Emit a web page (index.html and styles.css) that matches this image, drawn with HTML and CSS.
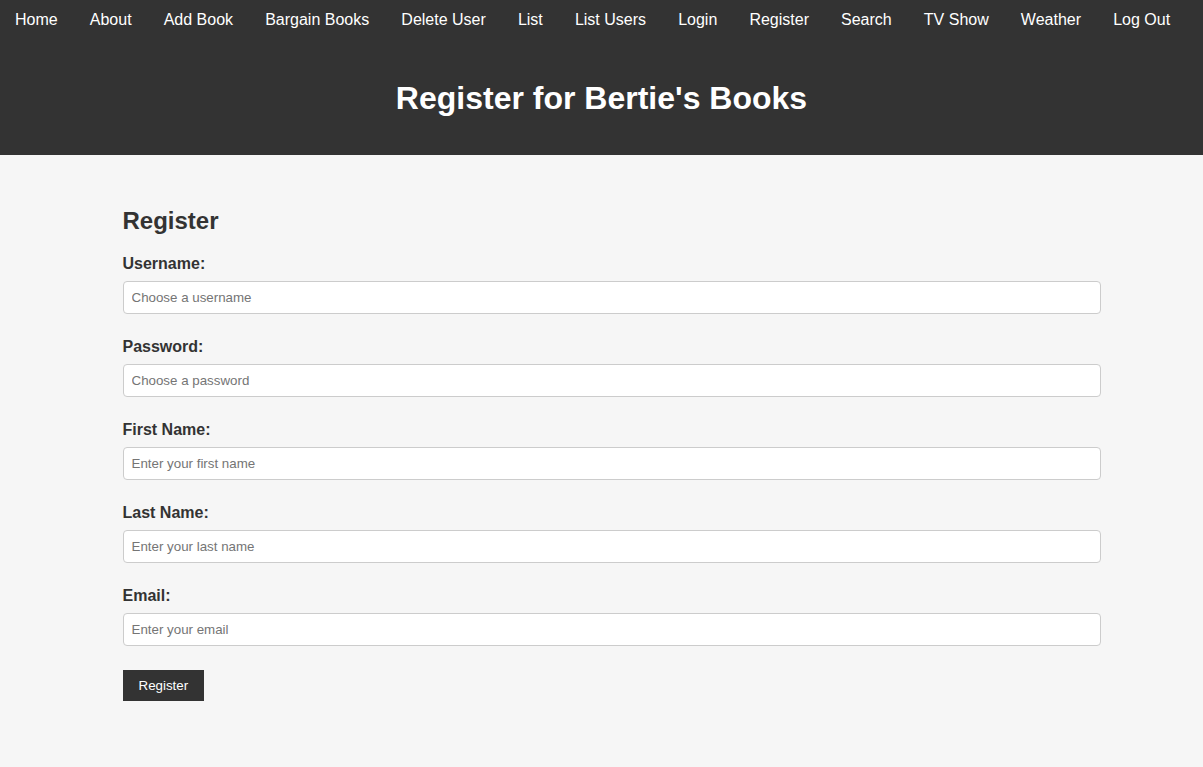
FILE: index.html
```html
<!DOCTYPE html>
<html lang="en">
<head>
<meta charset="utf-8">
<title>Register for Bertie's Books</title>
<link rel="stylesheet" href="styles.css">
</head>
<body>
<header class="site-header">
  <nav class="nav">
    <a href="#">Home</a>
    <a href="#">About</a>
    <a href="#">Add Book</a>
    <a href="#">Bargain Books</a>
    <a href="#">Delete User</a>
    <a href="#">List</a>
    <a href="#">List Users</a>
    <a href="#">Login</a>
    <a href="#">Register</a>
    <a href="#">Search</a>
    <a href="#">TV Show</a>
    <a href="#">Weather</a>
    <a href="#">Log Out</a>
  </nav>
  <h1 class="title">Register for Bertie's Books</h1>
</header>
<main class="main">
  <div class="container">
    <h2 class="heading">Register</h2>
    <form class="form">
      <div class="group">
        <label for="u">Username:</label>
        <input id="u" type="text" placeholder="Choose a username">
      </div>
      <div class="group">
        <label for="p">Password:</label>
        <input id="p" type="password" placeholder="Choose a password">
      </div>
      <div class="group">
        <label for="f">First Name:</label>
        <input id="f" type="text" placeholder="Enter your first name">
      </div>
      <div class="group">
        <label for="l">Last Name:</label>
        <input id="l" type="text" placeholder="Enter your last name">
      </div>
      <div class="group">
        <label for="e">Email:</label>
        <input id="e" type="email" placeholder="Enter your email">
      </div>
      <button type="button" class="btn">Register</button>
    </form>
  </div>
</main>
</body>
</html>
```

FILE: styles.css
```css
* { box-sizing: border-box; }
html, body { margin: 0; padding: 0; }
body {
  font-family: "Liberation Sans", Arial, sans-serif;
  background: #f6f6f6;
  color: #333;
  min-height: 767px;
}
.site-header {
  background: #333;
  color: #fff;
  height: 155px;
}
.nav {
  display: flex;
  height: 38px;
  align-items: center;
  padding-top: 2px;
}
.nav a {
  color: #fff;
  text-decoration: none;
  font-size: 16px;
  line-height: 18px;
  padding: 0 17.1px 0 15px;
}
.title {
  margin: 0;
  padding-top: 42px;
  text-align: center;
  font-size: 32px;
  line-height: 37px;
  font-weight: bold;
}
.main {
  background: #f6f6f6;
}
.container {
  width: 998px;
  margin: 0 auto;
  padding: 52px 20px 40px;
}
.heading {
  margin: 0 0 20px;
  font-size: 24px;
  line-height: 27px;
  font-weight: bold;
}
.group { margin-bottom: 23px; }
.group label {
  display: block;
  font-size: 16px;
  line-height: 18px;
  font-weight: bold;
  padding-top: 1px;
  margin-bottom: 8px;
}
.group input {
  display: block;
  width: calc(100% + 20px);
  height: 33px;
  padding: 8px;
  border: 1px solid #ccc;
  border-radius: 4px;
  background: #fff;
  font-family: "Liberation Sans", Arial, sans-serif;
  font-size: 13.333px;
  color: #333;
}
.group input::placeholder { color: #757575; }
.btn {
  margin-top: 1px;
  background: #333;
  color: #fff;
  border: none;
  padding: 8px 16px;
  width: 81px;
  height: 31px;
  font-family: "Liberation Sans", Arial, sans-serif;
  font-size: 13.333px;
  cursor: pointer;
}
```
